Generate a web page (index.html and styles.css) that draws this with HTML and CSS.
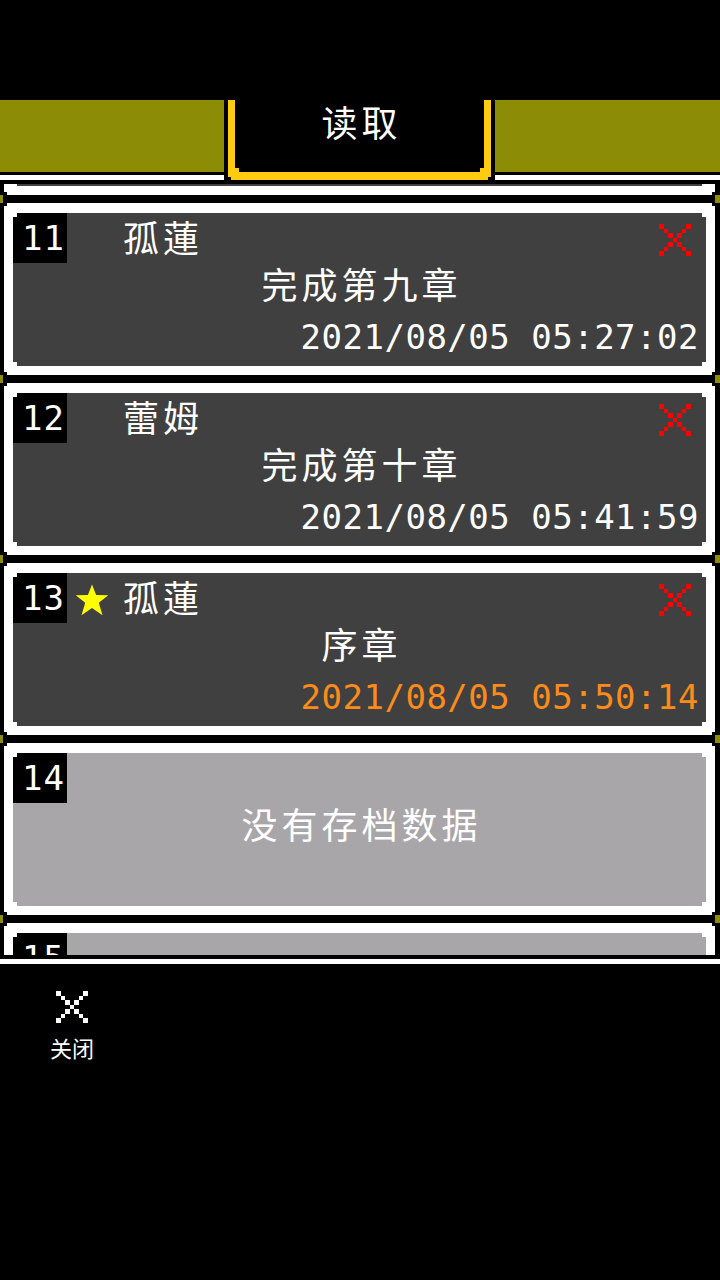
FILE: index.html
```html
<!DOCTYPE html>
<html lang="zh-CN">
<head>
<meta charset="utf-8">
<title>读取</title>
<link rel="stylesheet" href="styles.css">
</head>
<body>
<div class="screen">
  <header class="header">
    <div class="band"></div>
    <div class="rule"></div>
    <div class="tab">
      <div class="tab-frame">
        <div class="tab-face"><h1 class="title">读取</h1></div>
      </div>
    </div>
  </header>

  <main class="slots-view">
    <ol class="slots">
      <li class="slot">
        <div class="slot-body"></div>
      </li>

      <li class="slot">
        <div class="slot-body">
          <div class="slot-head">
            <span class="slot-no">11</span>
            <span class="mark"></span>
            <span class="name">孤蓮</span>
            <svg class="del" viewBox="0 0 7 7" shape-rendering="crispEdges"><path d="M0 0h1v1H0zM6 0h1v1H6zM1 1h1v1H1zM5 1h1v1H5zM2 2h1v1H2zM4 2h1v1H4zM3 3h1v1H3zM2 4h1v1H2zM4 4h1v1H4zM1 5h1v1H1zM5 5h1v1H5zM0 6h1v1H0zM6 6h1v1H6z"/></svg>
          </div>
          <div class="slot-title">完成第九章</div>
          <div class="slot-date">2021/08/05 05:27:02</div>
        </div>
      </li>

      <li class="slot">
        <div class="slot-body">
          <div class="slot-head">
            <span class="slot-no">12</span>
            <span class="mark"></span>
            <span class="name">蕾姆</span>
            <svg class="del" viewBox="0 0 7 7" shape-rendering="crispEdges"><path d="M0 0h1v1H0zM6 0h1v1H6zM1 1h1v1H1zM5 1h1v1H5zM2 2h1v1H2zM4 2h1v1H4zM3 3h1v1H3zM2 4h1v1H2zM4 4h1v1H4zM1 5h1v1H1zM5 5h1v1H5zM0 6h1v1H0zM6 6h1v1H6z"/></svg>
          </div>
          <div class="slot-title">完成第十章</div>
          <div class="slot-date">2021/08/05 05:41:59</div>
        </div>
      </li>

      <li class="slot">
        <div class="slot-body">
          <div class="slot-head">
            <span class="slot-no">13</span>
            <svg class="mark" viewBox="0 0 24 24"><polygon points="12,1 14.9,8.4 23.5,8.6 16.8,13.9 19.4,22.8 12,17.6 4.6,22.8 7.2,13.9 0.5,8.6 9.1,8.4"/></svg>
            <span class="name">孤蓮</span>
            <svg class="del" viewBox="0 0 7 7" shape-rendering="crispEdges"><path d="M0 0h1v1H0zM6 0h1v1H6zM1 1h1v1H1zM5 1h1v1H5zM2 2h1v1H2zM4 2h1v1H4zM3 3h1v1H3zM2 4h1v1H2zM4 4h1v1H4zM1 5h1v1H1zM5 5h1v1H5zM0 6h1v1H0zM6 6h1v1H6z"/></svg>
          </div>
          <div class="slot-title">序章</div>
          <div class="slot-date latest">2021/08/05 05:50:14</div>
        </div>
      </li>

      <li class="slot">
        <div class="slot-body empty">
          <div class="slot-head"><span class="slot-no">14</span></div>
          <div class="slot-title">没有存档数据</div>
        </div>
      </li>

      <li class="slot">
        <div class="slot-body empty">
          <div class="slot-head"><span class="slot-no">15</span></div>
        </div>
      </li>
    </ol>
  </main>

  <footer class="footer">
    <button class="close" type="button">
      <svg class="close-icon" viewBox="0 0 7 7" shape-rendering="crispEdges"><path d="M0 0h1v1H0zM6 0h1v1H6zM1 1h1v1H1zM5 1h1v1H5zM2 2h1v1H2zM4 2h1v1H4zM3 3h1v1H3zM2 4h1v1H2zM4 4h1v1H4zM1 5h1v1H1zM5 5h1v1H5zM0 6h1v1H0zM6 6h1v1H6z"/></svg>
      <span class="close-label">关闭</span>
    </button>
  </footer>
</div>
</body>
</html>
```

FILE: styles.css
```css
* {
  box-sizing: border-box;
}

html,
body {
  margin: 0;
  padding: 0;
  background: #000;
}

body {
  width: 720px;
  height: 1280px;
  overflow: hidden;
  color: #fff;
  font-family: "Noto Sans CJK SC", "Noto Sans", sans-serif;
}

.screen {
  padding-top: 100px;
}

/* ---------- header: olive band with the title tab ---------- */
.header {
  display: grid;
  grid-template-columns: 1fr;
  grid-template-rows: 72px 3px 5px 4px;
}

.band {
  grid-row: 1;
  grid-column: 1;
  background: #8c8c07;
}

.rule {
  grid-row: 3;
  grid-column: 1;
  background: #fff;
}

.tab {
  grid-row: 1 / 5;
  grid-column: 1;
  justify-self: center;
  width: 271px;
  background: #000;
  padding: 0 4px 4px;
  margin-left: -1px;
}

.tab-frame {
  height: 100%;
  background: #ffcc10;
  padding: 0 7px 8px;
  clip-path: polygon(0 0, 100% 0, 100% calc(100% - 3px), calc(100% - 3px) calc(100% - 3px),
    calc(100% - 3px) 100%, 3px 100%, 3px calc(100% - 3px), 0 calc(100% - 3px));
}

.tab-face {
  height: 100%;
  background: #000;
  display: flex;
  justify-content: center;
  align-items: flex-start;
  padding-top: 3px;
  clip-path: polygon(0 0, 100% 0, 100% calc(100% - 4px), calc(100% - 4px) calc(100% - 4px),
    calc(100% - 4px) 100%, 4px 100%, 4px calc(100% - 4px), 0 calc(100% - 4px));
}

.title {
  margin: 0;
  font-size: 36px;
  font-weight: 400;
  line-height: 36px;
  letter-spacing: 4px;
  padding-left: 4px;
}

/* ---------- save slots ---------- */
.slots-view {
  height: 771px;
  overflow: hidden;
}

.slots {
  list-style: none;
  margin: -161px 0 0;
  padding: 0 5px 0 4px;
  display: flex;
  flex-direction: column;
  gap: 8px;
  background:
    linear-gradient(to bottom, transparent 172px, #8c8c07 172px, #8c8c07 180px, transparent 180px) left top / 3px 180px repeat-y,
    linear-gradient(to bottom, transparent 172px, #8c8c07 172px, #8c8c07 180px, transparent 180px) right top / 5px 180px repeat-y;
}

.slot {
  flex: none;
  height: 172px;
  background: #fff;
  padding: 10px 9px 9px;
  clip-path: polygon(3px 0, calc(100% - 3px) 0, calc(100% - 3px) 3px, 100% 3px,
    100% calc(100% - 3px), calc(100% - 3px) calc(100% - 3px), calc(100% - 3px) 100%,
    3px 100%, 3px calc(100% - 3px), 0 calc(100% - 3px), 0 3px, 3px 3px);
}

.slot-body {
  height: 153px;
  background: #404040;
  clip-path: polygon(4px 0, calc(100% - 4px) 0, calc(100% - 4px) 4px, 100% 4px,
    100% calc(100% - 4px), calc(100% - 4px) calc(100% - 4px), calc(100% - 4px) 100%,
    4px 100%, 4px calc(100% - 4px), 0 calc(100% - 4px), 0 4px, 4px 4px);
}

.slot-body.empty {
  background: #a9a6a9;
}

.slot-head {
  display: flex;
  align-items: center;
  height: 50px;
}

.slot-no {
  flex: none;
  width: 54px;
  height: 50px;
  background: #000;
  text-align: right;
  padding-right: 2px;
  font-family: "DejaVu Sans Mono", "Liberation Mono", monospace;
  font-size: 34px;
  line-height: 50px;
  letter-spacing: 1px;
}

.mark {
  flex: none;
  width: 34px;
  height: 34px;
  margin: 4px 14px 0 8px;
  fill: #ffff00;
}

.name {
  flex: 1;
  font-size: 36px;
  line-height: 46px;
  padding-bottom: 4px;
  letter-spacing: 4px;
}

.del {
  flex: none;
  width: 32px;
  height: 32px;
  margin: 4px 15px 0 0;
  fill: #ff0000;
}

.slot-title {
  height: 44px;
  text-align: center;
  font-size: 36px;
  line-height: 40px;
  letter-spacing: 4px;
  padding-left: 4px;
}

.slot-date {
  margin-top: 8px;
  height: 44px;
  text-align: right;
  padding-right: 7px;
  font-family: "DejaVu Sans Mono", "Liberation Mono", monospace;
  font-size: 34px;
  letter-spacing: 0.5px;
  line-height: 44px;
}

.slot-date.latest {
  color: #fb8b1a;
}

/* ---------- footer ---------- */
.footer {
  margin-top: 4px;
  border-top: 5px solid #fff;
  padding: 27px 0 0 40px;
}

.close {
  width: 64px;
  padding: 0;
  border: 0;
  background: none;
  color: #fff;
  display: flex;
  flex-direction: column;
  align-items: center;
  gap: 12px;
  font-family: "Noto Sans CJK SC", "Noto Sans", sans-serif;
}

.close-icon {
  width: 32px;
  height: 32px;
  fill: #fff;
}

.close-label {
  font-size: 22px;
  line-height: 24px;
}
```
